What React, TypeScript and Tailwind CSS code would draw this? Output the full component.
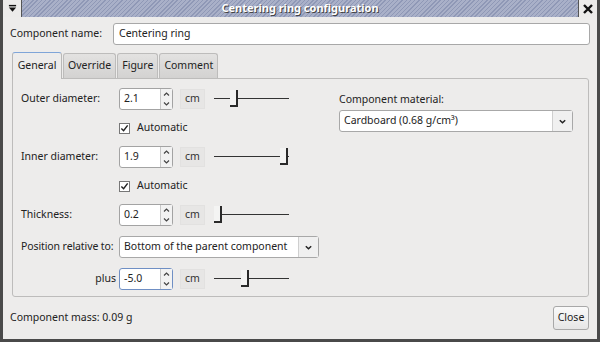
import React from "react";

const FONT = { fontFamily: '"Noto Sans", "DejaVu Sans", sans-serif' };

function Spinner({ value, focused }: { value: string; focused?: boolean }) {
  return (
    <div
      className={`flex h-[22px] w-[54px] rounded-[3px] border bg-white ${
        focused ? "border-[#6f8fc4]" : "border-[#a3a3a3]"
      }`}
    >
      <div className="flex flex-1 items-center pl-[4px] text-[10.5px] text-[#222]">{value}</div>
      <div className="flex w-[12px] flex-col border-l border-[#c8c8c8] bg-[#f2f2f2] text-[#444]">
        <svg viewBox="0 0 10 10" className="h-[10px] w-[11px]">
          <path d="M2.5 6.5 L5 4 L7.5 6.5" fill="none" stroke="#444" strokeWidth="1.2" />
        </svg>
        <svg viewBox="0 0 10 10" className="h-[10px] w-[11px]">
          <path d="M2.5 3.5 L5 6 L7.5 3.5" fill="none" stroke="#444" strokeWidth="1.2" />
        </svg>
      </div>
    </div>
  );
}

function Unit() {
  return (
    <div className="ml-[7px] flex h-[20px] w-[25px] items-center border border-[#e2e1e0] bg-[#e7e6e5] pl-[4px] text-[10.5px] text-[#333]">
      cm
    </div>
  );
}

function Slider({ pos }: { pos: number }) {
  return (
    <div className="relative ml-[9px] h-[22px] w-[75px]">
      <div className="absolute left-0 right-0 top-[10px] h-[1px] bg-[#333]" />
      <div
        className="absolute top-[2px] h-[17px] w-[8px] border-b-[2px] border-r-[2px] border-b-[#2a2a2a] border-r-[#2a2a2a] bg-[#f4f4f3]"
        style={{ left: pos }}
      />
    </div>
  );
}

function Check() {
  return (
    <div className="ml-[98px] flex h-[16px] items-center gap-[7px] text-[10.5px] text-[#222]">
      <div className="flex h-[11px] w-[11px] items-center justify-center border border-[#777] bg-white">
        <svg viewBox="0 0 10 10" className="h-[9px] w-[9px]">
          <path d="M1.5 5 L4 7.5 L8.5 1.5" fill="none" stroke="#222" strokeWidth="1.6" />
        </svg>
      </div>
      Automatic
    </div>
  );
}

function Chevron() {
  return (
    <div className="flex w-[20px] items-center justify-center border-l border-[#cfcfcf] bg-[#f0f0f0]">
      <svg viewBox="0 0 10 10" className="h-[9px] w-[9px]">
        <path d="M2 3.5 L5 6.5 L8 3.5" fill="none" stroke="#222" strokeWidth="1.6" />
      </svg>
    </div>
  );
}

export default function App() {
  return (
    <div
      className="flex h-[342px] w-[600px] flex-col overflow-hidden border-x-[3px] border-b-[3px] border-[#4a4a4a] bg-[#edeceb]"
      style={FONT}
    >
      {/* title bar */}
      <div className="flex h-[17px] shrink-0 items-stretch bg-[repeating-linear-gradient(135deg,#8f98b6_0px,#8f98b6_1px,#a9b0c8_1px,#a9b0c8_3px)]">
        <div className="flex w-[19px] items-center justify-center border-r border-[#555] bg-[#ecebea]">
          <svg viewBox="0 0 10 10" className="h-[9px] w-[9px]">
            <rect x="1" y="1" width="8" height="1.6" fill="#111" />
            <path d="M1 4 L9 4 L5 8.5 Z" fill="#111" />
          </svg>
        </div>
        <div className="flex flex-1 items-center justify-center text-[11px] font-bold text-white [text-shadow:1px_1px_0_#444]">
          Centering ring configuration
        </div>
        <div className="flex w-[19px] items-center justify-center border-l border-[#555] bg-[#ecebea]">
          <svg viewBox="0 0 12 12" className="h-[12px] w-[12px]">
            <path d="M2 2 L10 10 M10 2 L2 10" fill="none" stroke="#111" strokeWidth="2.4" />
          </svg>
        </div>
      </div>

      {/* body */}
      <div className="flex flex-1 flex-col px-[7px] pt-[6px]">
        <div className="flex h-[22px] items-center">
          <div className="w-[103px] text-[10.5px] text-[#222]">Component name:</div>
          <div className="flex h-[22px] flex-1 items-center rounded-[3px] border border-[#a8a8a8] bg-white pl-[5px] text-[10.5px] text-[#222]">
            Centering ring
          </div>
        </div>

        {/* tabs */}
        <div className="ml-[2px] mt-[7px] flex h-[26px] items-end gap-[1px]">
          <div className="relative z-10 -mb-[1px] flex h-[27px] w-[50px] items-center justify-center rounded-t-[3px] border border-b-0 border-[#b9b8b7] border-t-[#7fa5d8] bg-[#edeceb] text-[10.5px] text-[#222]">
            General
          </div>
          {["Override", "Figure", "Comment"].map((t) => (
            <div
              key={t}
              className="flex h-[25px] items-center rounded-t-[3px] border border-b-0 border-[#bdbcbb] bg-gradient-to-b from-[#e3e2e1] to-[#d3d2d1] px-[4px] text-[10.5px] text-[#222]"
            >
              {t}
            </div>
          ))}
        </div>

        {/* panel */}
        <div className="ml-[2px] mr-[1px] flex h-[219px] rounded-b-[3px] rounded-tr-[3px] border border-[#bdbcbb] pl-[8px] pt-[9px]">
          <div className="flex w-[310px] flex-col gap-[10px]">
            <div className="flex items-center">
              <div className="w-[98px] text-[10.5px] text-[#222]">Outer diameter:</div>
              <Spinner value="2.1" />
              <Unit />
              <Slider pos={16} />
            </div>
            <Check />
            <div className="flex items-center">
              <div className="w-[98px] text-[10.5px] text-[#222]">Inner diameter:</div>
              <Spinner value="1.9" />
              <Unit />
              <Slider pos={66} />
            </div>
            <Check />
            <div className="flex items-center">
              <div className="w-[98px] text-[10.5px] text-[#222]">Thickness:</div>
              <Spinner value="0.2" />
              <Unit />
              <Slider pos={0} />
            </div>
            <div className="flex items-center">
              <div className="w-[98px] whitespace-nowrap text-[10.5px] tracking-[-0.1px] text-[#222]">
                Position relative to:
              </div>
              <div className="flex h-[22px] w-[200px] rounded-[3px] border border-[#a8a8a8] bg-white">
                <div className="flex flex-1 items-center pl-[4px] text-[10.5px] text-[#222]">
                  Bottom of the parent component
                </div>
                <Chevron />
              </div>
            </div>
            <div className="flex items-center">
              <div className="w-[98px] pr-[3px] text-right text-[10.5px] text-[#222]">plus</div>
              <Spinner value="-5.0" focused />
              <Unit />
              <Slider pos={27} />
            </div>
          </div>

          <div className="ml-[8px] flex flex-col pt-[4px]">
            <div className="text-[10.5px] leading-[14px] text-[#222]">Component material:</div>
            <div className="mt-[4px] flex h-[22px] w-[234px] rounded-[3px] border border-[#a8a8a8] bg-white">
              <div className="flex flex-1 items-center pl-[4px] text-[10.5px] text-[#222]">
                Cardboard (0.68 g/cm³)
              </div>
              <Chevron />
            </div>
          </div>
        </div>

        {/* footer */}
        <div className="mt-[9px] flex items-center justify-between pr-[1px]">
          <div className="text-[10.5px] text-[#222]">Component mass: 0.09 g</div>
          <div className="flex h-[24px] w-[36px] items-center justify-center rounded-[3px] border border-[#a8a8a8] bg-gradient-to-b from-[#fafafa] to-[#e6e6e6] text-[10.5px] text-[#222]">
            Close
          </div>
        </div>
      </div>
    </div>
  );
}
